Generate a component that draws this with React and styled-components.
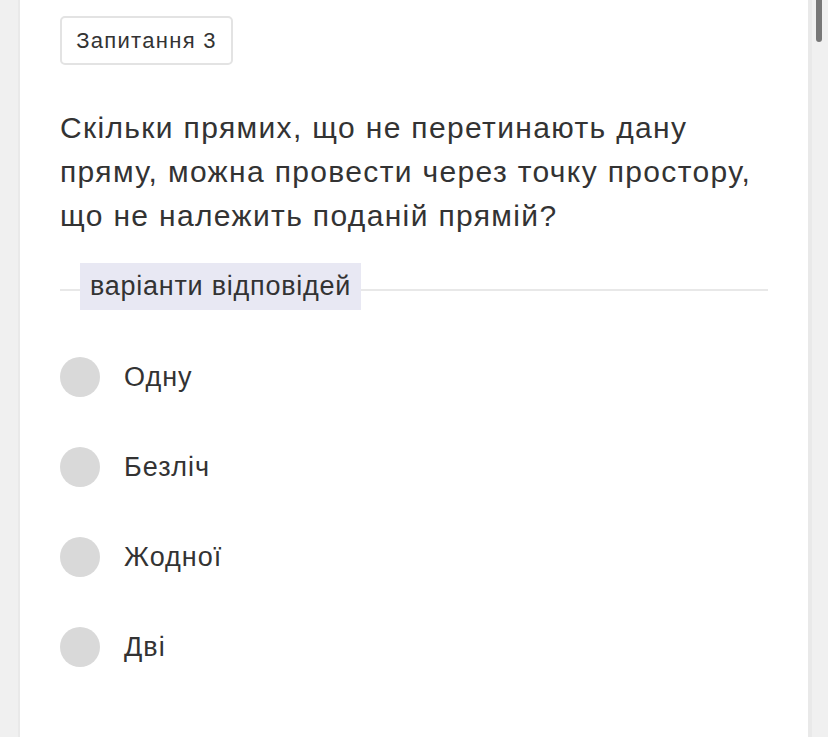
import React from "react";
import styled, { createGlobalStyle } from "styled-components";

const Global = createGlobalStyle`
  html, body { margin: 0; padding: 0; background: #f0f0f0; }
  body { font-family: "Liberation Sans", Arial, sans-serif; color: #333; }
`;

const Page = styled.div`
  display: flex;
  min-height: 737px;
  height: 737px;
  overflow: hidden;
`;

const SideGutter = styled.div`
  width: 20px;
  flex: none;
  background: linear-gradient(to right, #f0f0f0 0 18px, #e9e9e9 18px 20px);
`;

const Card = styled.main`
  width: 788px;
  flex: none;
  background: #fff;
  box-sizing: border-box;
  padding: 16px 40px 0 40px;
`;

const ScrollTrack = styled.div`
  width: 20px;
  flex: none;
  background: linear-gradient(to right, #e9e9e9 0 4px, #f0f0f0 4px);
  display: flex;
  flex-direction: column;
  align-items: flex-start;
`;

const ScrollThumb = styled.div`
  width: 6px;
  height: 42px;
  margin-left: 8px;
  background: #777;
  border-radius: 0 0 3px 3px;
`;

const Badge = styled.div`
  display: inline-flex;
  align-items: center;
  justify-content: center;
  box-sizing: border-box;
  width: 173px;
  height: 49px;
  border: 2px solid #e3e3e3;
  border-radius: 5px;
  font-size: 22px;
  letter-spacing: 1.3px;
  color: #333;
`;

const Question = styled.p`
  margin: 41px 0 0 0;
  font-size: 30px;
  line-height: 44px;
  letter-spacing: 1.35px;
  color: #333;
`;

const Divider = styled.div`
  display: flex;
  align-items: flex-start;
  margin-top: 25px;
`;

const Rule = styled.div`
  height: 2px;
  background: #e8e8e8;
  margin-top: 26px;
  flex: ${(p) => (p.$grow ? 1 : "none")};
  width: ${(p) => (p.$grow ? "auto" : "20px")};
`;

const Legend = styled.div`
  background: #e8e8f3;
  height: 47px;
  padding: 0 10px;
  display: flex;
  align-items: center;
  font-size: 27px;
  letter-spacing: 0.75px;
  color: #333;
`;

const Options = styled.div`
  margin-top: 22px;
  display: flex;
  flex-direction: column;
`;

const Option = styled.label`
  height: 90px;
  display: flex;
  align-items: center;
  gap: 24px;
  font-size: 27px;
  letter-spacing: 1px;
  color: #333;
`;

const Radio = styled.span`
  width: 40px;
  height: 40px;
  border-radius: 50%;
  background: #d9d9d9;
  flex: none;
`;

const answers = ["Одну", "Безліч", "Жодної", "Дві"];

export default function App() {
  return (
    <>
      <Global />
      <Page>
        <SideGutter />
        <Card>
          <Badge>Запитання 3</Badge>
          <Question>
            Скільки прямих, що не перетинають дану пряму, можна провести через
            точку простору, що не належить поданій прямій?
          </Question>
          <Divider>
            <Rule />
            <Legend>варіанти відповідей</Legend>
            <Rule $grow />
          </Divider>
          <Options>
            {answers.map((a) => (
              <Option key={a}>
                <Radio />
                {a}
              </Option>
            ))}
          </Options>
        </Card>
        <ScrollTrack>
          <ScrollThumb />
        </ScrollTrack>
      </Page>
    </>
  );
}
